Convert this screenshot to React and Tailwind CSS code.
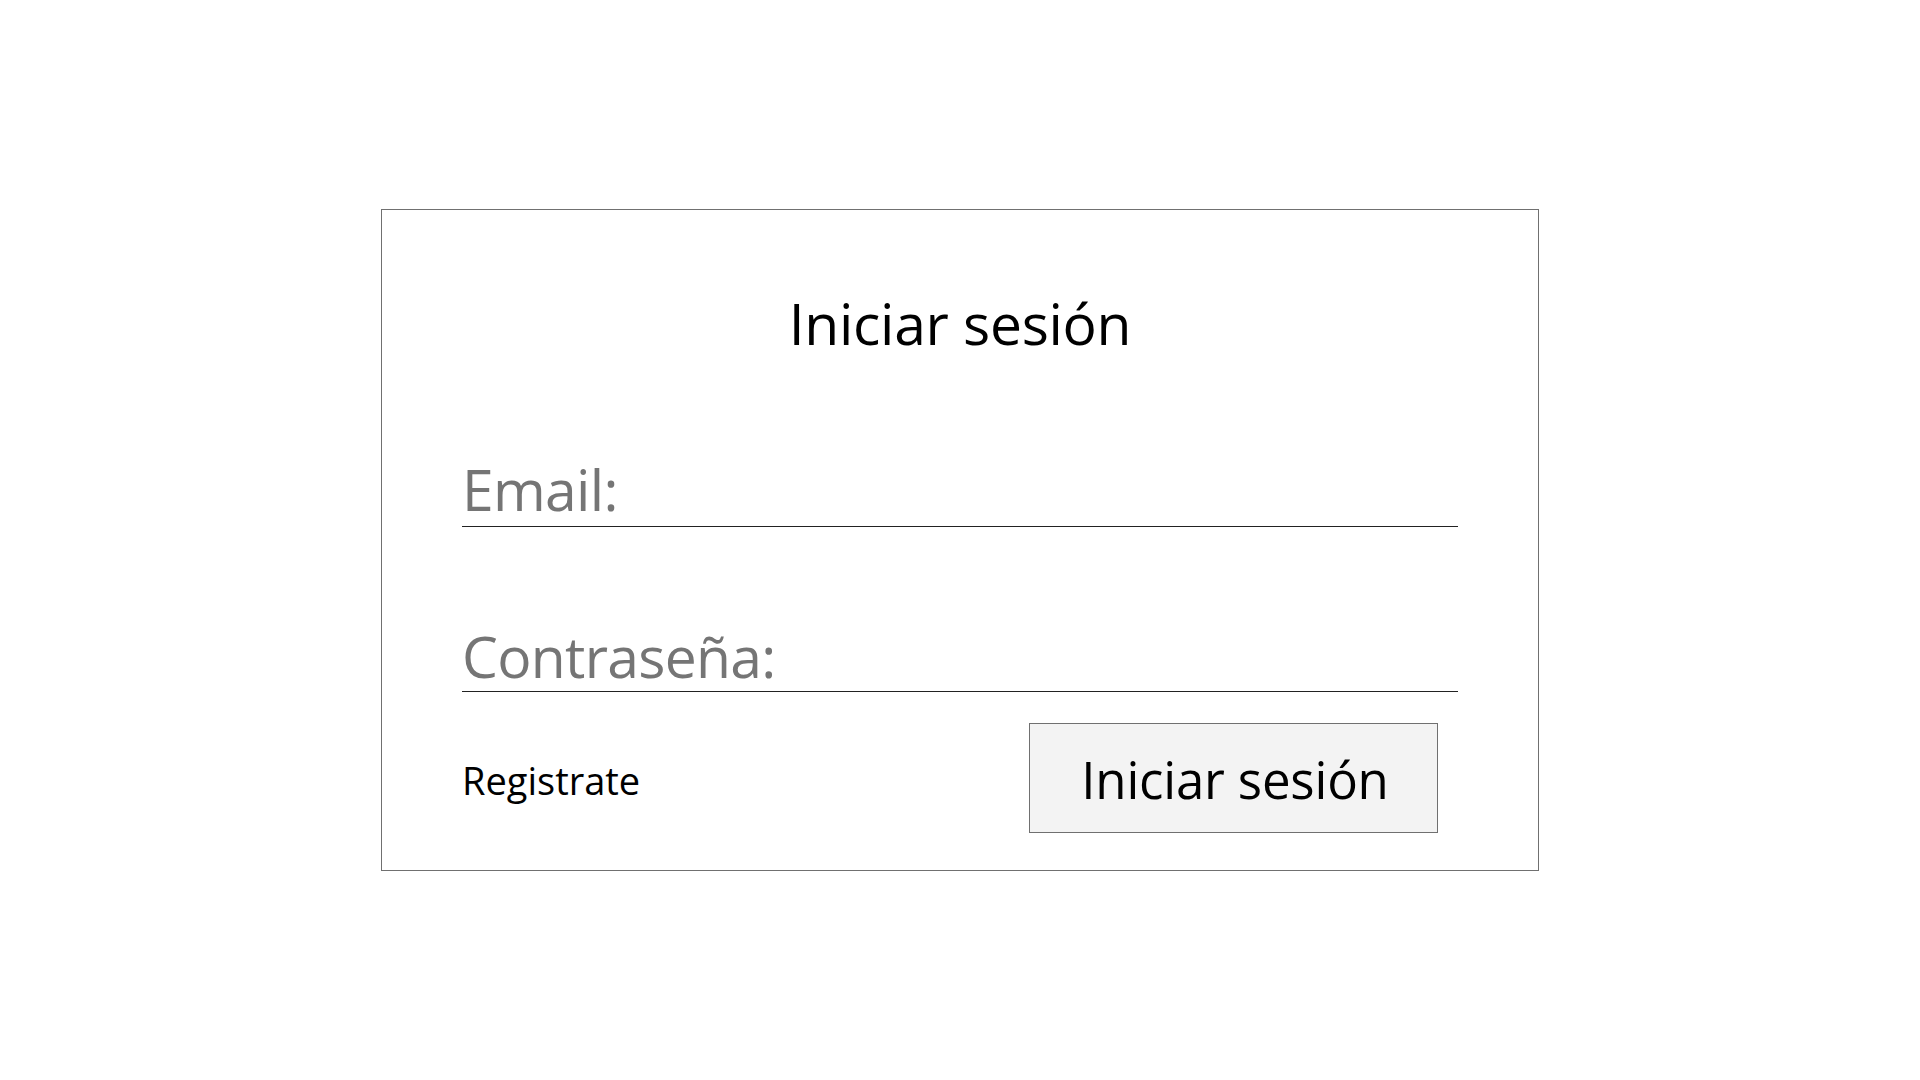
export default function App() {
	return (
		<div
			className="min-h-screen w-full flex items-center justify-center bg-white text-black"
			style={{ fontFamily: '"Open Sans", "Noto Sans", sans-serif' }}
		>
			<div className="w-[1158px] h-[662px] border border-[#707070] flex flex-col px-[80px]">
				<h1 className="mt-[85px] text-center text-[57px] leading-none font-normal tracking-[-0.3px]">
					Iniciar sesión
				</h1>

				<div className="mt-[109px] border-b border-[#222] pb-[8px] text-[57px] leading-none text-[#757575] tracking-[-0.7px]">
					Email:
				</div>

				<div className="mt-[101px] border-b border-[#222] pb-[6px] text-[57px] leading-none text-[#757575] tracking-[-0.7px]">
					Contraseña:
				</div>

				<div className="mt-[31px] flex items-center justify-between pr-[20px]">
					<a className="pt-[4px] text-[38px] leading-none text-black cursor-pointer">
						Registrate
					</a>
					<button
						type="button"
						className="w-[409px] h-[110px] pt-[3px] pl-[3px] bg-[#f3f3f3] border border-[#707070] text-[51px] leading-none text-black tracking-[-0.2px]"
					>
						Iniciar sesión
					</button>
				</div>
			</div>
		</div>
	);
}
